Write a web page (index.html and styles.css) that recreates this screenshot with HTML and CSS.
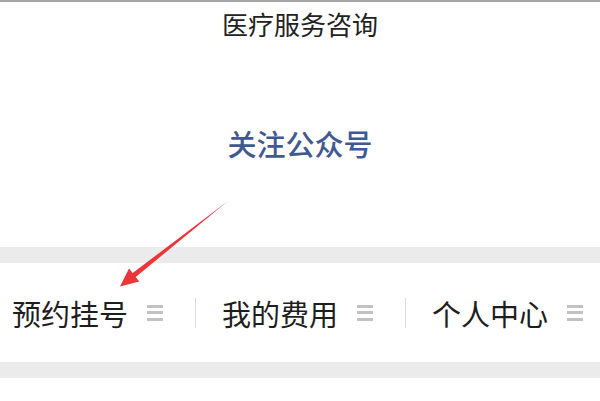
FILE: index.html
```
<!DOCTYPE html>
<html>
	<head>
		<meta charset="utf-8">
		<meta name="viewport" content="width=device-width, initial-scale=1.0">
		<title>医疗服务咨询</title>
		<link rel="stylesheet" href="styles.css">
	</head>
<body class="body">

<div class="page">

	<div class="header">医疗服务咨询</div>

	<div class="follow">
		<span class="follow-link">关注公众号</span>
	</div>

	<div class="band"></div>

	<div class="menu">
		<div class="menu-item first">
			<span class="menu-text">预约挂号</span>
			<span class="burger"><i></i><i></i><i></i></span>
		</div>
		<div class="menu-item">
			<span class="menu-text">我的费用</span>
			<span class="burger"><i></i><i></i><i></i></span>
		</div>
		<div class="menu-item">
			<span class="menu-text">个人中心</span>
			<span class="burger"><i></i><i></i><i></i></span>
		</div>
	</div>

	<div class="band"></div>

	<!-- arrow pointing at the menu -->
	<svg class="arrow" width="600" height="401" viewBox="0 0 600 401">
		<polygon points="228,199 135.7,275 139.3,279.6 120,284.5 129,266.5 132.7,271" fill="#ec3539"/>
	</svg>
</div>

</body>
</html>
```

FILE: styles.css
```
html,
body {
	margin: 0;
	background: #fff;
	font-family: "Noto Sans CJK SC", "Noto Sans", sans-serif;
}

.page {
	position: relative;
	width: 600px;
	height: 401px;
	overflow: hidden;
	border-top: 2px solid #a4a4a4;
	box-sizing: border-box;
}

.header {
	height: 42px;
	display: flex;
	align-items: center;
	justify-content: center;
	font-size: 26px;
	color: #222;
}

.follow {
	height: 203px;
	display: flex;
	align-items: center;
	justify-content: center;
	padding-bottom: 6px;
	box-sizing: border-box;
}

.follow-link {
	font-size: 29px;
	font-weight: 500;
	color: #3f5a92;
}

.band {
	height: 16px;
	background: #ebebeb;
}

.menu {
	display: flex;
	height: 99px;
	align-items: center;
}

.menu-item {
	display: flex;
	flex-shrink: 0;
	align-items: center;
	padding: 0 32px 0 26px;
	border-left: 1px solid #dcdcdc;
	height: 30px;
	white-space: nowrap;
}

.menu-item.first {
	padding-left: 12px;
	border-left: none;
}

.menu-text {
	font-size: 29px;
	color: #1e1e1e;
	line-height: 30px;
}

.burger {
	display: flex;
	flex-direction: column;
	justify-content: space-between;
	flex-shrink: 0;
	width: 16px;
	height: 16px;
	margin-left: 19px;
}

.burger i {
	display: block;
	height: 3px;
	background: #c2c2c2;
}

.arrow {
	position: absolute;
	top: 0;
	left: 0;
	pointer-events: none;
}
```
